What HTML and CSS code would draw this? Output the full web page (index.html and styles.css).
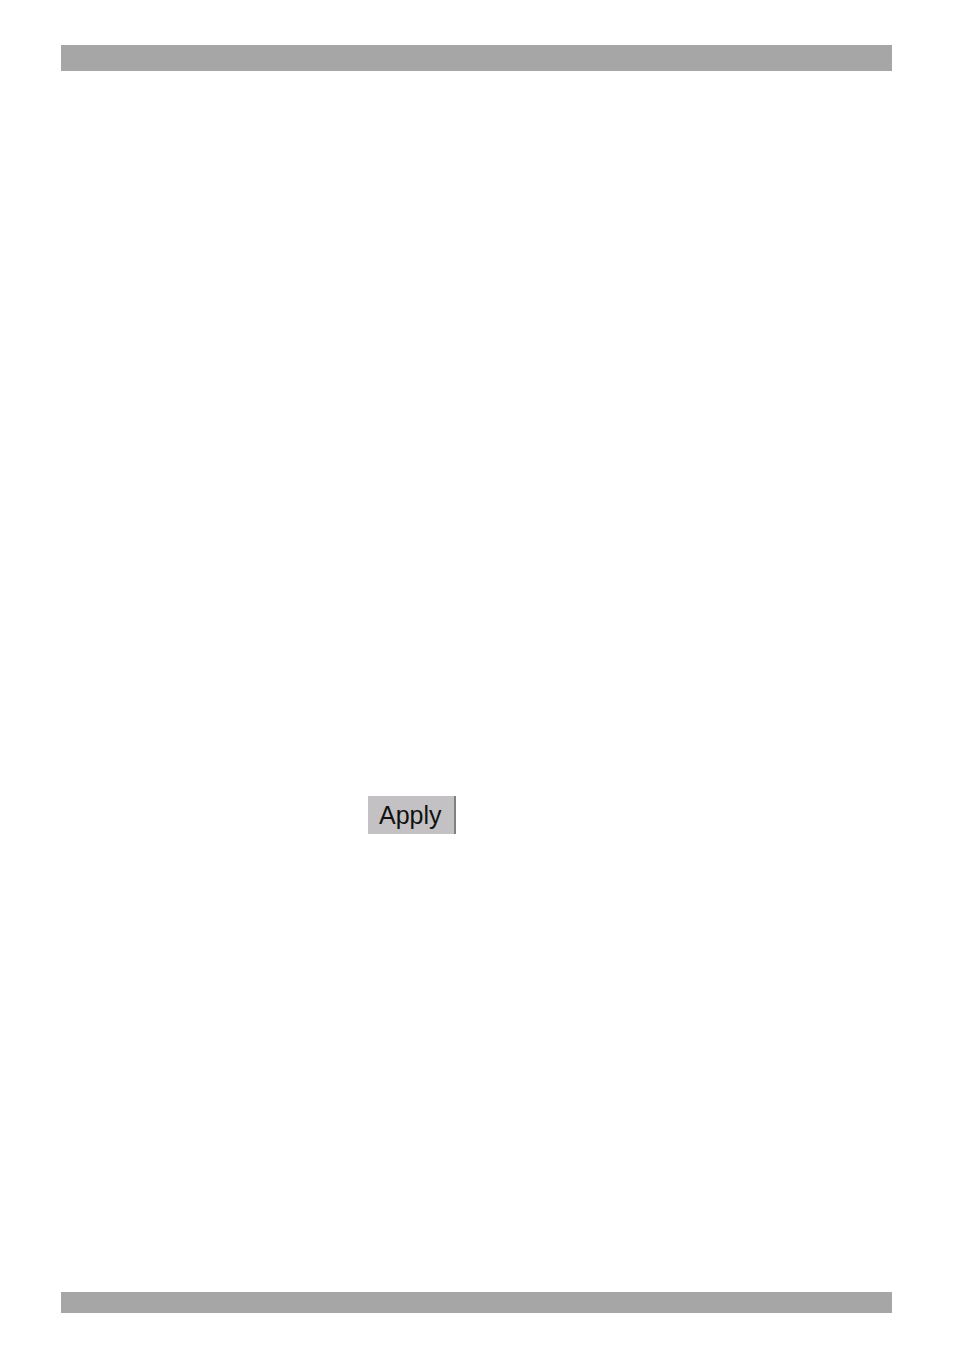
FILE: index.html
```html
<!DOCTYPE html>
<html lang="en">
<head>
<meta charset="utf-8">
<meta name="viewport" content="width=device-width, initial-scale=1">
<title>Apply</title>
<link rel="stylesheet" href="styles.css">
</head>
<body>
<div class="page">
<header class="bar bar-top"></header>
<main class="content">
<button class="apply" type="button">Apply</button>
</main>
<footer class="bar bar-bottom"></footer>
</div>
</body>
</html>
```

FILE: styles.css
```css
* {
  box-sizing: border-box;
}

body {
  margin: 0;
  background: #fff;
}

.page {
  display: flex;
  flex-direction: column;
  min-height: 100vh;
  padding: 45px 62px 38px 61px;
}

.bar {
  background: #a6a6a6;
}

.bar-top {
  height: 26px;
}

.bar-bottom {
  height: 21px;
}

.content {
  display: grid;
  flex: 1;
  grid-template-columns: 307fr 524fr;
  grid-template-rows: 725fr 496fr;
}

.apply {
  grid-area: 2 / 2;
  place-self: start;
  height: 38px;
  padding: 0 12px 0 11px;
  border: 0;
  border-right: 2px solid #808080;
  border-radius: 0;
  background: #c3c1c3;
  color: #111;
  font: 25px/38px "Liberation Sans", Arial, sans-serif;
}
```
